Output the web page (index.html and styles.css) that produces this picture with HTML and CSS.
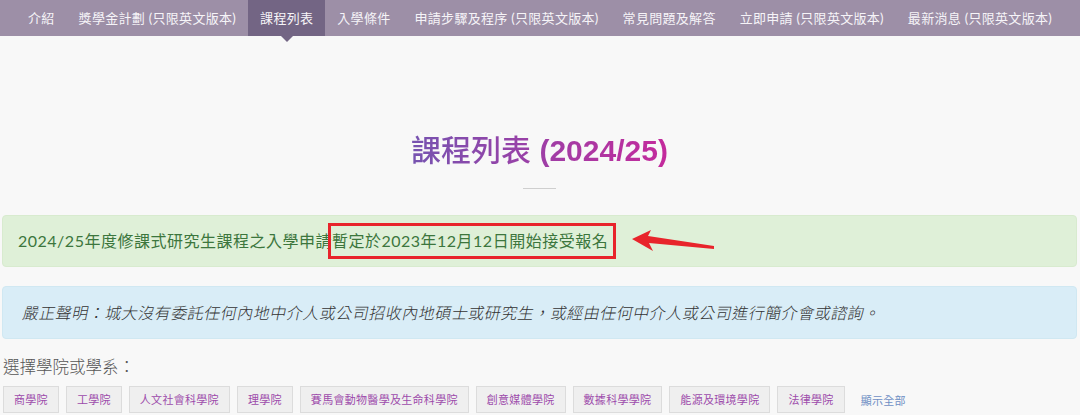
FILE: index.html
```html
<!DOCTYPE html>
<html lang="zh-Hant">
<head>
    <meta charset="UTF-8">
    <meta name="viewport" content="width=device-width, initial-scale=1.0">
    <title>課程列表</title>
    <link rel="stylesheet" href="styles.css">
</head>
<body>
    <nav class="top-nav">
        <a href="#">介紹</a>
        <a href="#">獎學金計劃 (只限英文版本)</a>
        <a href="#" class="active">課程列表</a>
        <a href="#">入學條件</a>
        <a href="#">申請步驟及程序 (只限英文版本)</a>
        <a href="#">常見問題及解答</a>
        <a href="#">立即申請 (只限英文版本)</a>
        <a href="#">最新消息 (只限英文版本)</a>
    </nav>

    <div class="container">
        <div class="title-wrap">
            <h1 class="page-title"><span class="cjk">課程列表</span> (2024/25)</h1>
        </div>
        <div class="divider"></div>

        <div class="alert alert-success">
            2024/25年度修課式研究生課程之入學申請暫定於2023年12月12日開始接受報名
            <!-- annotation from the screenshot -->
            <span class="mark-box"></span>
            <svg class="mark-arrow" width="86" height="26" viewBox="0 0 86 26">
                <polygon points="2,12 21,3 18,9 84,19 84,22 19,16 23,24" fill="#e8242b"/>
            </svg>
        </div>

        <div class="alert alert-info">
            <span class="slant">嚴正聲明：城大沒有委託任何內地中介人或公司招收內地碩士或研究生，或經由任何中介人或公司進行簡介會或諮詢。</span>
        </div>

        <p class="filter-label">選擇學院或學系：</p>
        <div class="filter-list">
            <a href="#" class="filter-btn">商學院</a>
            <a href="#" class="filter-btn">工學院</a>
            <a href="#" class="filter-btn">人文社會科學院</a>
            <a href="#" class="filter-btn">理學院</a>
            <a href="#" class="filter-btn">賽馬會動物醫學及生命科學院</a>
            <a href="#" class="filter-btn">創意媒體學院</a>
            <a href="#" class="filter-btn">數據科學學院</a>
            <a href="#" class="filter-btn">能源及環境學院</a>
            <a href="#" class="filter-btn">法律學院</a>
            <a href="#" class="show-all">顯示全部</a>
        </div>
    </div>
</body>
</html>
```

FILE: styles.css
```css
body {
    margin: 0;
    background-color: #f8f8f8;
    font-family: 'Lato', 'Noto Sans CJK TC', sans-serif;
    color: #333;
}
.top-nav {
    display: flex;
    background-color: #9d8fa7;
    height: 36px;
    padding-left: 16px;
}
.top-nav a {
    position: relative;
    display: block;
    padding: 0 12px;
    line-height: 36px;
    font-size: 13px;
    letter-spacing: 0.3px;
    color: #f6f4f8;
    text-decoration: none;
    white-space: nowrap;
}
.top-nav a.active {
    background-color: #736584;
}
.top-nav a.active::after {
    content: '';
    position: absolute;
    left: 50%;
    bottom: -6px;
    margin-left: -6px;
    border-left: 6px solid transparent;
    border-right: 6px solid transparent;
    border-top: 6px solid #736584;
}
.container {
    padding: 0 3px 0 2px;
}
.title-wrap {
    text-align: center;
    margin-top: 92px;
}
.page-title {
    display: inline-block;
    margin: 0;
    font-family: 'Liberation Sans', 'Noto Sans CJK TC', sans-serif;
    font-size: 30px;
    line-height: 40px;
    font-weight: 700;
    background: linear-gradient(90deg, #7653b0, #c42a9c);
    -webkit-background-clip: text;
    background-clip: text;
    color: transparent;
}
.page-title .cjk {
    font-family: 'Noto Sans CJK TC', sans-serif;
    font-weight: 500;
}
.divider {
    width: 33px;
    height: 1px;
    background-color: #cfcfcf;
    margin: 17px auto 0;
}
.alert {
    position: relative;
    border: 1px solid transparent;
    border-radius: 4px;
    padding: 14px 15px;
    line-height: 22px;
    font-size: 16px;
    letter-spacing: 0.5px;
}
.alert-success {
    margin-top: 26px;
    background-color: #dff0d8;
    border-color: #d8ebcf;
    color: #3c763d;
}
.alert-info {
    margin-top: 19px;
    background-color: #d9edf7;
    border-color: #d0e8f2;
    padding: 14px 18px;
    font-weight: 300;
}
.alert-info .slant {
    display: inline-block;
    font-family: 'Noto Sans CJK TC', sans-serif;
    color: #333;
    transform: skewX(-12deg);
    transform-origin: left bottom;
}
.mark-box {
    position: absolute;
    left: 325px;
    top: 7px;
    width: 282px;
    height: 30px;
    border: 3px solid #e8242b;
}
.mark-arrow {
    position: absolute;
    left: 627px;
    top: 11px;
}
.filter-label {
    margin: 16px 0 0 1px;
    font-size: 16.5px;
    line-height: 24px;
    color: #555;
    font-weight: 300;
}
.filter-list {
    display: flex;
    align-items: center;
    gap: 7px;
    margin-top: 7px;
    padding-left: 1px;
}
.filter-btn {
    display: block;
    padding: 0 10px;
    height: 25px;
    line-height: 25px;
    font-size: 11px;
    letter-spacing: 0.3px;
    color: #9d4bab;
    background-color: #efefef;
    border: 1px solid #dcdcdc;
    text-decoration: none;
}
.show-all {
    margin-left: 9px;
    font-size: 11px;
    letter-spacing: 0.3px;
    color: #6f8fc4;
    text-decoration: none;
}
```
